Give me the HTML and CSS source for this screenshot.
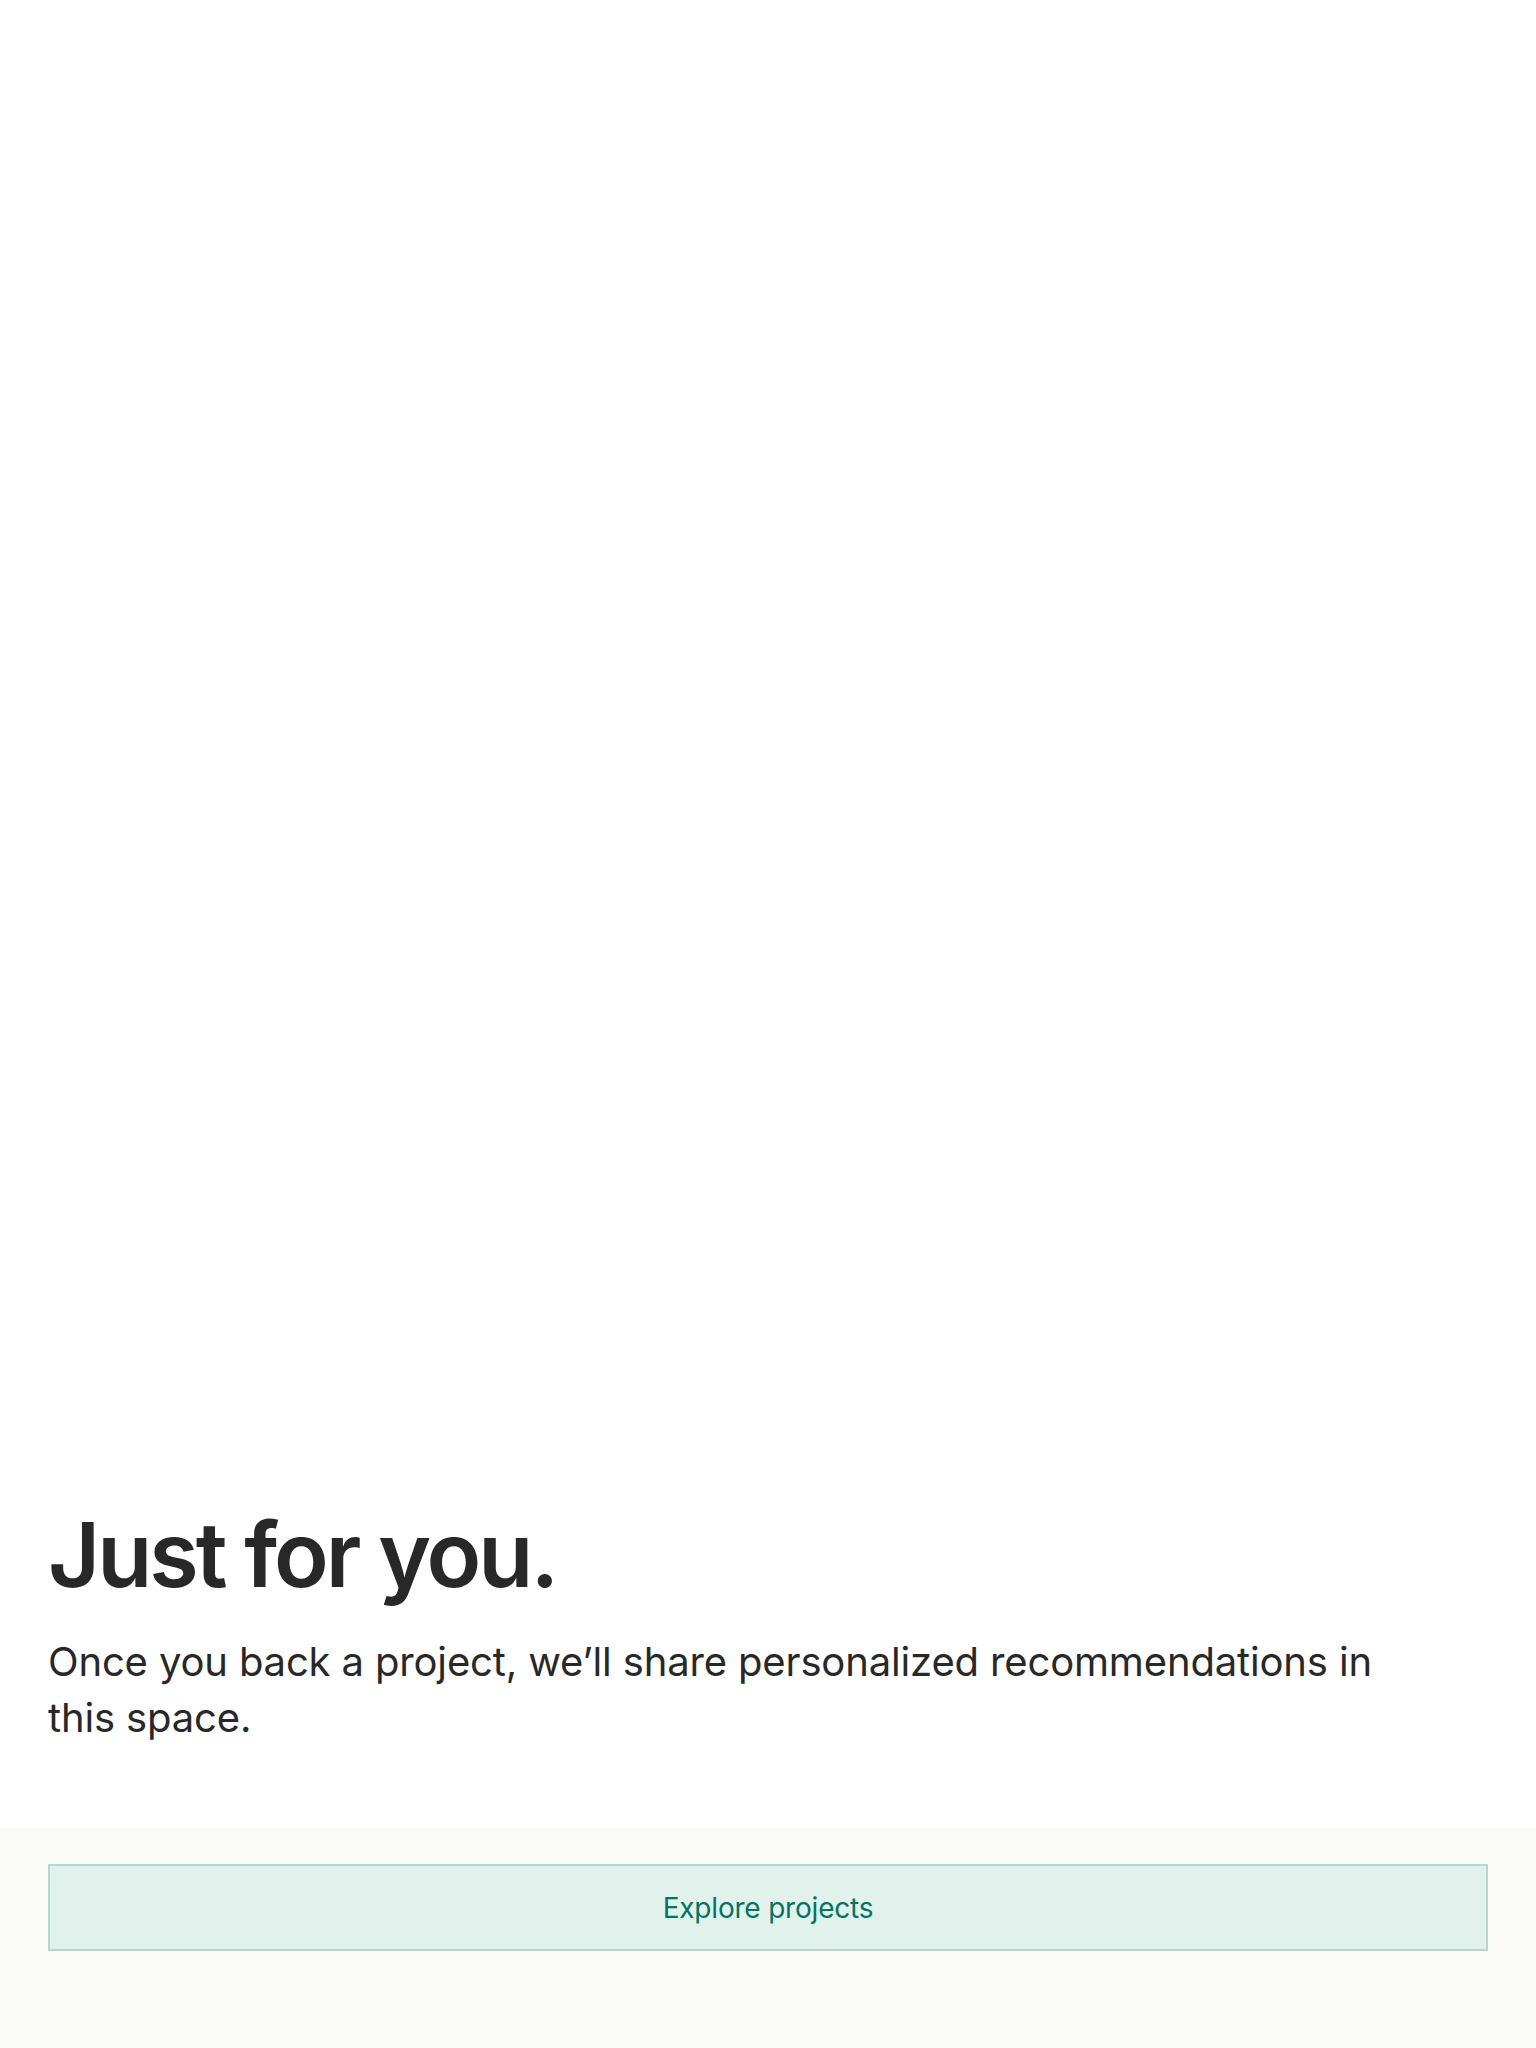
FILE: index.html
```html
<!DOCTYPE html>
<html lang="en">
<head>
<meta charset="utf-8">
<title>Just for you</title>
<link rel="stylesheet" href="styles.css">
</head>
<body>
<div class="page">
  <section class="hero">
    <h1 class="title">Just for you.</h1>
    <p class="lead">Once you back a project, we’ll share personalized recommendations in this space.</p>
  </section>
  <footer class="footer">
    <a class="explore" href="#">Explore projects</a>
  </footer>
</div>
</body>
</html>
```

FILE: styles.css
```css
* { box-sizing: border-box; }
html, body { margin: 0; padding: 0; background: #ffffff; }
body { font-family: Inter, "Noto Sans", sans-serif; color: #282828; }
.page { min-height: 2048px; display: flex; flex-direction: column; }
.hero {
  flex: 1;
  display: flex;
  flex-direction: column;
  justify-content: flex-end;
  padding: 0 48px 82px;
}
.title {
  margin: 0 0 29px;
  font-size: 90px;
  line-height: 100px;
  font-weight: 600;
  letter-spacing: -3px;
  color: #282828;
}
.lead {
  margin: 0;
  max-width: 1380px;
  font-size: 40px;
  line-height: 56px;
  font-weight: 400;
  letter-spacing: -0.15px;
  color: #282828;
}
.footer {
  background: #fafaf9;
  padding: 36px 48px 97px;
}
.explore {
  display: flex;
  align-items: center;
  justify-content: center;
  height: 87px;
  background: #e1f1ec;
  border: 2px solid #b4d8cf;
  color: #037362;
  font-size: 28px;
  letter-spacing: -0.2px;
  text-decoration: none;
}
```
